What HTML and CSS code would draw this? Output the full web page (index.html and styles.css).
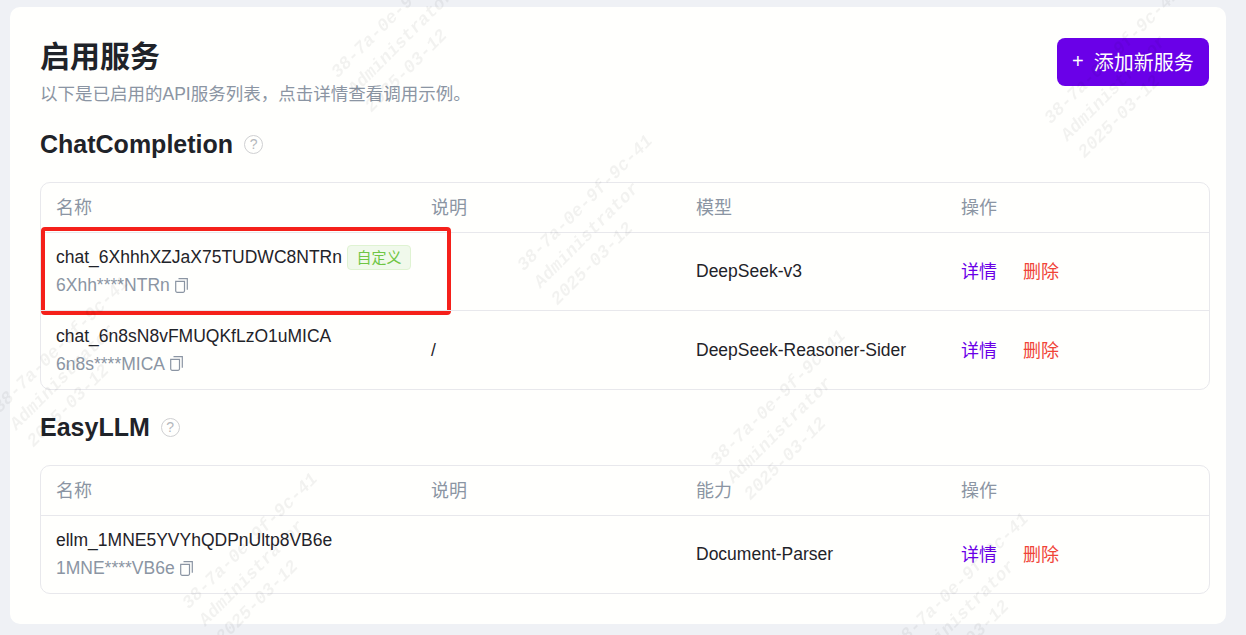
FILE: index.html
```html
<!DOCTYPE html>
<html lang="zh-CN">
<head>
    <meta charset="UTF-8">
    <meta name="viewport" content="width=device-width, initial-scale=1.0">
    <title>启用服务</title>
    <link rel="stylesheet" href="styles.css">
</head>
<body>

<main class="card">
    <header class="page-head">
        <div>
            <h1>启用服务</h1>
            <p class="subtitle">以下是已启用的API服务列表，点击详情查看调用示例。</p>
        </div>
        <button class="add-btn"><span class="plus">+</span>添加新服务</button>
    </header>

    <section class="group">
        <h2>ChatCompletion <span class="help">?</span></h2>
        <div class="table">
            <div class="row head">
                <div>名称</div>
                <div>说明</div>
                <div>模型</div>
                <div>操作</div>
            </div>
            <div class="row">
                <div class="service">
                    <div class="name">chat_6XhhhXZJaX75TUDWC8NTRn<span class="tag">自定义</span></div>
                    <div class="key">6Xhh****NTRn
                        <svg class="copy" viewBox="0 0 13 15"><path d="M3.500 .7h8.800v11M.7 3.300h8.800v9.500a1.500 1.500 0 0 1-1.500 1.500h-5.800a1.500 1.500 0 0 1-1.500-1.500z"/></svg>
                    </div>
                </div>
                <div></div>
                <div>DeepSeek-v3</div>
                <div class="actions"><a class="detail">详情</a><a class="remove">删除</a></div>
                <div class="highlight"></div>
            </div>
            <div class="row tall">
                <div class="service">
                    <div class="name">chat_6n8sN8vFMUQKfLzO1uMICA</div>
                    <div class="key">6n8s****MICA
                        <svg class="copy" viewBox="0 0 13 15"><path d="M3.500 .7h8.800v11M.7 3.300h8.800v9.500a1.500 1.500 0 0 1-1.500 1.500h-5.800a1.500 1.500 0 0 1-1.500-1.500z"/></svg>
                    </div>
                </div>
                <div>/</div>
                <div>DeepSeek-Reasoner-Sider</div>
                <div class="actions"><a class="detail">详情</a><a class="remove">删除</a></div>
            </div>
        </div>
    </section>

    <section class="group">
        <h2>EasyLLM <span class="help">?</span></h2>
        <div class="table">
            <div class="row head">
                <div>名称</div>
                <div>说明</div>
                <div>能力</div>
                <div>操作</div>
            </div>
            <div class="row">
                <div class="service">
                    <div class="name">ellm_1MNE5YVYhQDPnUltp8VB6e</div>
                    <div class="key">1MNE****VB6e
                        <svg class="copy" viewBox="0 0 13 15"><path d="M3.500 .7h8.800v11M.7 3.300h8.800v9.500a1.500 1.500 0 0 1-1.500 1.500h-5.800a1.500 1.500 0 0 1-1.500-1.500z"/></svg>
                    </div>
                </div>
                <div></div>
                <div>Document-Parser</div>
                <div class="actions"><a class="detail">详情</a><a class="remove">删除</a></div>
            </div>
        </div>
    </section>
</main>

<!-- 水印 -->
<div class="watermarks">
    <div class="wm wm-1">38-7a-0e-9f-9c-41<br>Administrator<br>2025-03-12</div>
    <div class="wm wm-2">38-7a-0e-9f-9c-41<br>Administrator<br>2025-03-12</div>
    <div class="wm wm-3">38-7a-0e-9f-9c-41<br>Administrator<br>2025-03-12</div>
    <div class="wm wm-4">38-7a-0e-9f-9c-41<br>Administrator<br>2025-03-12</div>
    <div class="wm wm-5">38-7a-0e-9f-9c-41<br>Administrator<br>2025-03-12</div>
    <div class="wm wm-6">38-7a-0e-9f-9c-41<br>Administrator<br>2025-03-12</div>
    <div class="wm wm-7">38-7a-0e-9f-9c-41<br>Administrator<br>2025-03-12</div>
</div>

</body>
</html>
```

FILE: styles.css
```css
html, body {
    height: 100%;
}
body {
    background-color: #eff1f5;
    color: #1f2329;
    font-family: "Liberation Sans", "Noto Sans CJK SC", sans-serif;
    font-size: 17.500px;
    margin: 0;
    overflow: hidden;
    padding: 7px 20px 11px 10px;
    box-sizing: border-box;
}
.card {
    background-color: #fffffd;
    border-radius: 10px;
    height: 617px;
    padding: 31px 16px 0 30px;
    box-sizing: border-box;
}
.page-head {
    display: flex;
    justify-content: space-between;
    align-items: flex-start;
}
h1 {
    margin: 0;
    font-size: 30px;
    line-height: 38px;
    font-weight: 700;
}
.subtitle {
    margin: 7px 0 0;
    color: #8b95a3;
    font-size: 17.500px;
    line-height: 22px;
}
.add-btn {
    display: flex;
    align-items: center;
    background-color: #6a00e8;
    color: #ffffff;
    border: none;
    border-radius: 8px;
    font-family: inherit;
    font-size: 20px;
    width: 152px;
    height: 48px;
    margin-right: 1px;
    padding: 0 0 2px 15px;
}
.plus {
    margin-right: 10px;
}
h2 {
    display: flex;
    align-items: center;
    gap: 11px;
    margin: 0;
    font-size: 25px;
    line-height: 30px;
    font-weight: 700;
}
.help {
    width: 17px;
    height: 17px;
    border: 1.500px solid #cfd0d2;
    border-radius: 50%;
    color: #b5b8bc;
    font-size: 14px;
    font-weight: 400;
    line-height: 17px;
    text-align: center;
}
.group {
    margin-top: 24px;
}
.group + .group {
    margin-top: 22px;
}
.table {
    margin-top: 23px;
    border: 1px solid #e8e8ec;
    border-radius: 10px;
}
.row {
    display: grid;
    grid-template-columns: 375px 265px 265px 1fr;
    align-items: center;
    position: relative;
    min-height: 77px;
    border-top: 1px solid #e8e8ec;
}
.row.tall {
    min-height: 78px;
}
.row > div {
    padding-left: 15px;
}
.row.head {
    min-height: 49px;
    padding-bottom: 4px;
    box-sizing: border-box;
    border-top: none;
    color: #8b95a3;
    font-size: 18px;
}
.row > .service {
    padding-bottom: 1px;
}
.name {
    display: flex;
    align-items: center;
    line-height: 26px;
}
.key {
    display: flex;
    align-items: center;
    gap: 5px;
    color: #8b95a3;
    line-height: 26px;
    margin-top: 2px;
}
.copy {
    width: 13px;
    height: 15px;
    fill: none;
    stroke: #8b95a3;
    stroke-width: 1.200;
}
.tag {
    margin-left: 5px;
    height: 23px;
    width: 62px;
    background-color: #f0f9eb;
    border: 1px solid #dff3d2;
    border-radius: 4px;
    color: #6fc644;
    font-size: 15px;
    line-height: 23px;
    text-align: center;
}
.actions {
    display: flex;
    gap: 26px;
    font-size: 18px;
    margin-top: -3px;
}
.detail {
    color: #6a00e8;
}
.remove {
    color: #f04438;
}
/* 标注红框 */
.row > .highlight {
    position: absolute;
    left: 0;
    top: -6px;
    width: 410px;
    height: 88px;
    padding: 0;
    box-sizing: border-box;
    border: 4px solid #f5201a;
    border-radius: 4px;
}
.watermarks {
    position: fixed;
    inset: 0;
    overflow: hidden;
    pointer-events: none;
}
.wm {
    position: absolute;
    transform: translate(-50%, -50%) rotate(-45deg);
    color: rgba(0, 0, 0, 0.05);
    font-family: "Liberation Mono", monospace;
    font-size: 18px;
    font-style: italic;
    font-weight: 700;
    line-height: 24px;
    white-space: nowrap;
}
.wm-1 { left: 416px; top: 27px; }
.wm-2 { left: 602px; top: 220px; }
.wm-3 { left: 795px; top: 415px; }
.wm-4 { left: 978px; top: 598px; }
.wm-5 { left: 1129px; top: 73px; }
.wm-6 { left: 78px; top: 362px; }
.wm-7 { left: 267px; top: 558px; }
```
